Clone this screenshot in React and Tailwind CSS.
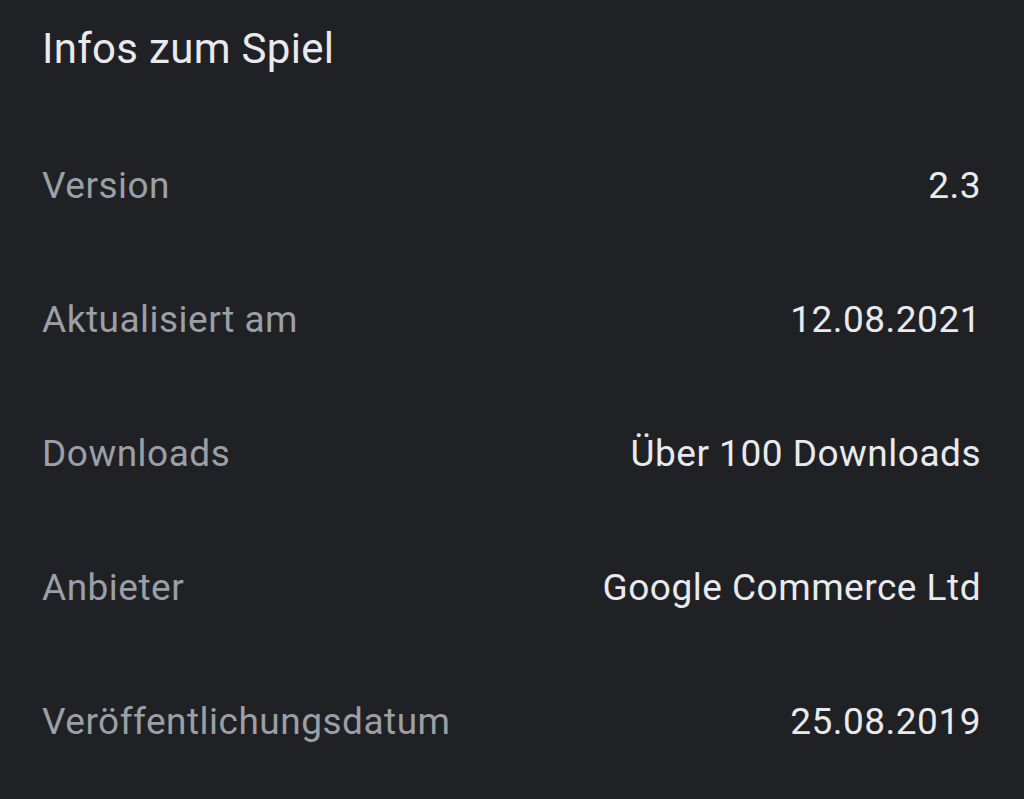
import React from "react";

const rows = [
  { label: "Version", value: "2.3" },
  { label: "Aktualisiert am", value: "12.08.2021" },
  { label: "Downloads", value: "Über 100 Downloads" },
  { label: "Anbieter", value: "Google Commerce Ltd" },
  { label: "Veröffentlichungsdatum", value: "25.08.2019" },
];

const App = () => {
  return (
    <div className="w-full h-[799px] overflow-hidden bg-[#202124] pl-[42px] pr-[43px] pt-[25px] font-['Roboto',sans-serif]">
      {/* Heading */}
      <h2 className="text-[42px] leading-[48px] tracking-[0.3px] text-[#e8eaed]">Infos zum Spiel</h2>

      <div className="mt-[46px]">
        {rows.map((row) => (
          <div key={row.label} className="flex justify-between items-center text-[37px] leading-[134px] tracking-[0.5px]">
            <span className="text-[#9aa0a6]">{row.label}</span>
            <span className="text-[#e8eaed]">{row.value}</span>
          </div>
        ))}
      </div>
    </div>
  );
};

export default App;
